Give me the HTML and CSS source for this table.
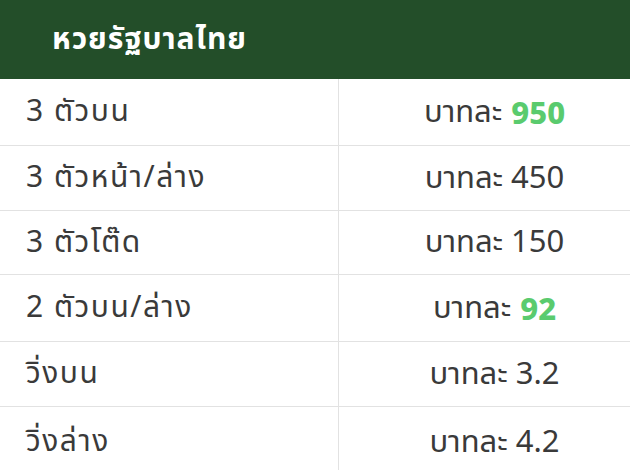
FILE: index.html
```html
<!DOCTYPE html>
<html lang="th">
<head>
<meta charset="utf-8">
<link rel="stylesheet" href="styles.css">
</head>
<body>
<div class="table">
  <div class="head">หวยรัฐบาลไทย</div>
  <div class="row r1"><div class="name">3 ตัวบน</div><div class="rate">บาทละ <b class="hi">950</b></div></div>
  <div class="row r2"><div class="name">3 ตัวหน้า/ล่าง</div><div class="rate">บาทละ 450</div></div>
  <div class="row r3"><div class="name">3 ตัวโต๊ด</div><div class="rate">บาทละ 150</div></div>
  <div class="row r4"><div class="name">2 ตัวบน/ล่าง</div><div class="rate">บาทละ <b class="hi">92</b></div></div>
  <div class="row r5"><div class="name">วิ่งบน</div><div class="rate">บาทละ 3.2</div></div>
  <div class="row r6"><div class="name">วิ่งล่าง</div><div class="rate">บาทละ 4.2</div></div>
</div>
</body>
</html>
```
FILE: styles.css
```css
html, body { margin: 0; padding: 0; background: #fff; }
body { font-family: "Noto Sans", "Noto Sans Thai", "DejaVu Sans", sans-serif; color: #3a3a3a; width: 630px; height: 470px; overflow: hidden; }
.table { display: flex; flex-direction: column; }
.head { background: #234e29; color: #fff; height: 79px; display: flex; align-items: center; padding-left: 52px; font-size: 30px; font-weight: 700; letter-spacing: 1px; box-sizing: border-box; }
.row { display: grid; grid-template-columns: 339px 1fr; border-bottom: 1px solid #e2e2e2; box-sizing: border-box; }
.r1 { height: 67px; }
.r2 { height: 65px; }
.r3 { height: 64px; }
.r4 { height: 67px; }
.r5 { height: 65px; }
.r6 { height: 70px; border-bottom: none; }
.name { display: flex; align-items: center; padding-left: 26px; font-size: 30px; font-weight: 400; letter-spacing: 1.5px; border-right: 1px solid #e2e2e2; }
.rate { display: flex; align-items: center; justify-content: center; padding-left: 20px; font-size: 31px; }
.hi { color: #5acb6e; font-weight: 800; margin-left: 9px; }
```
